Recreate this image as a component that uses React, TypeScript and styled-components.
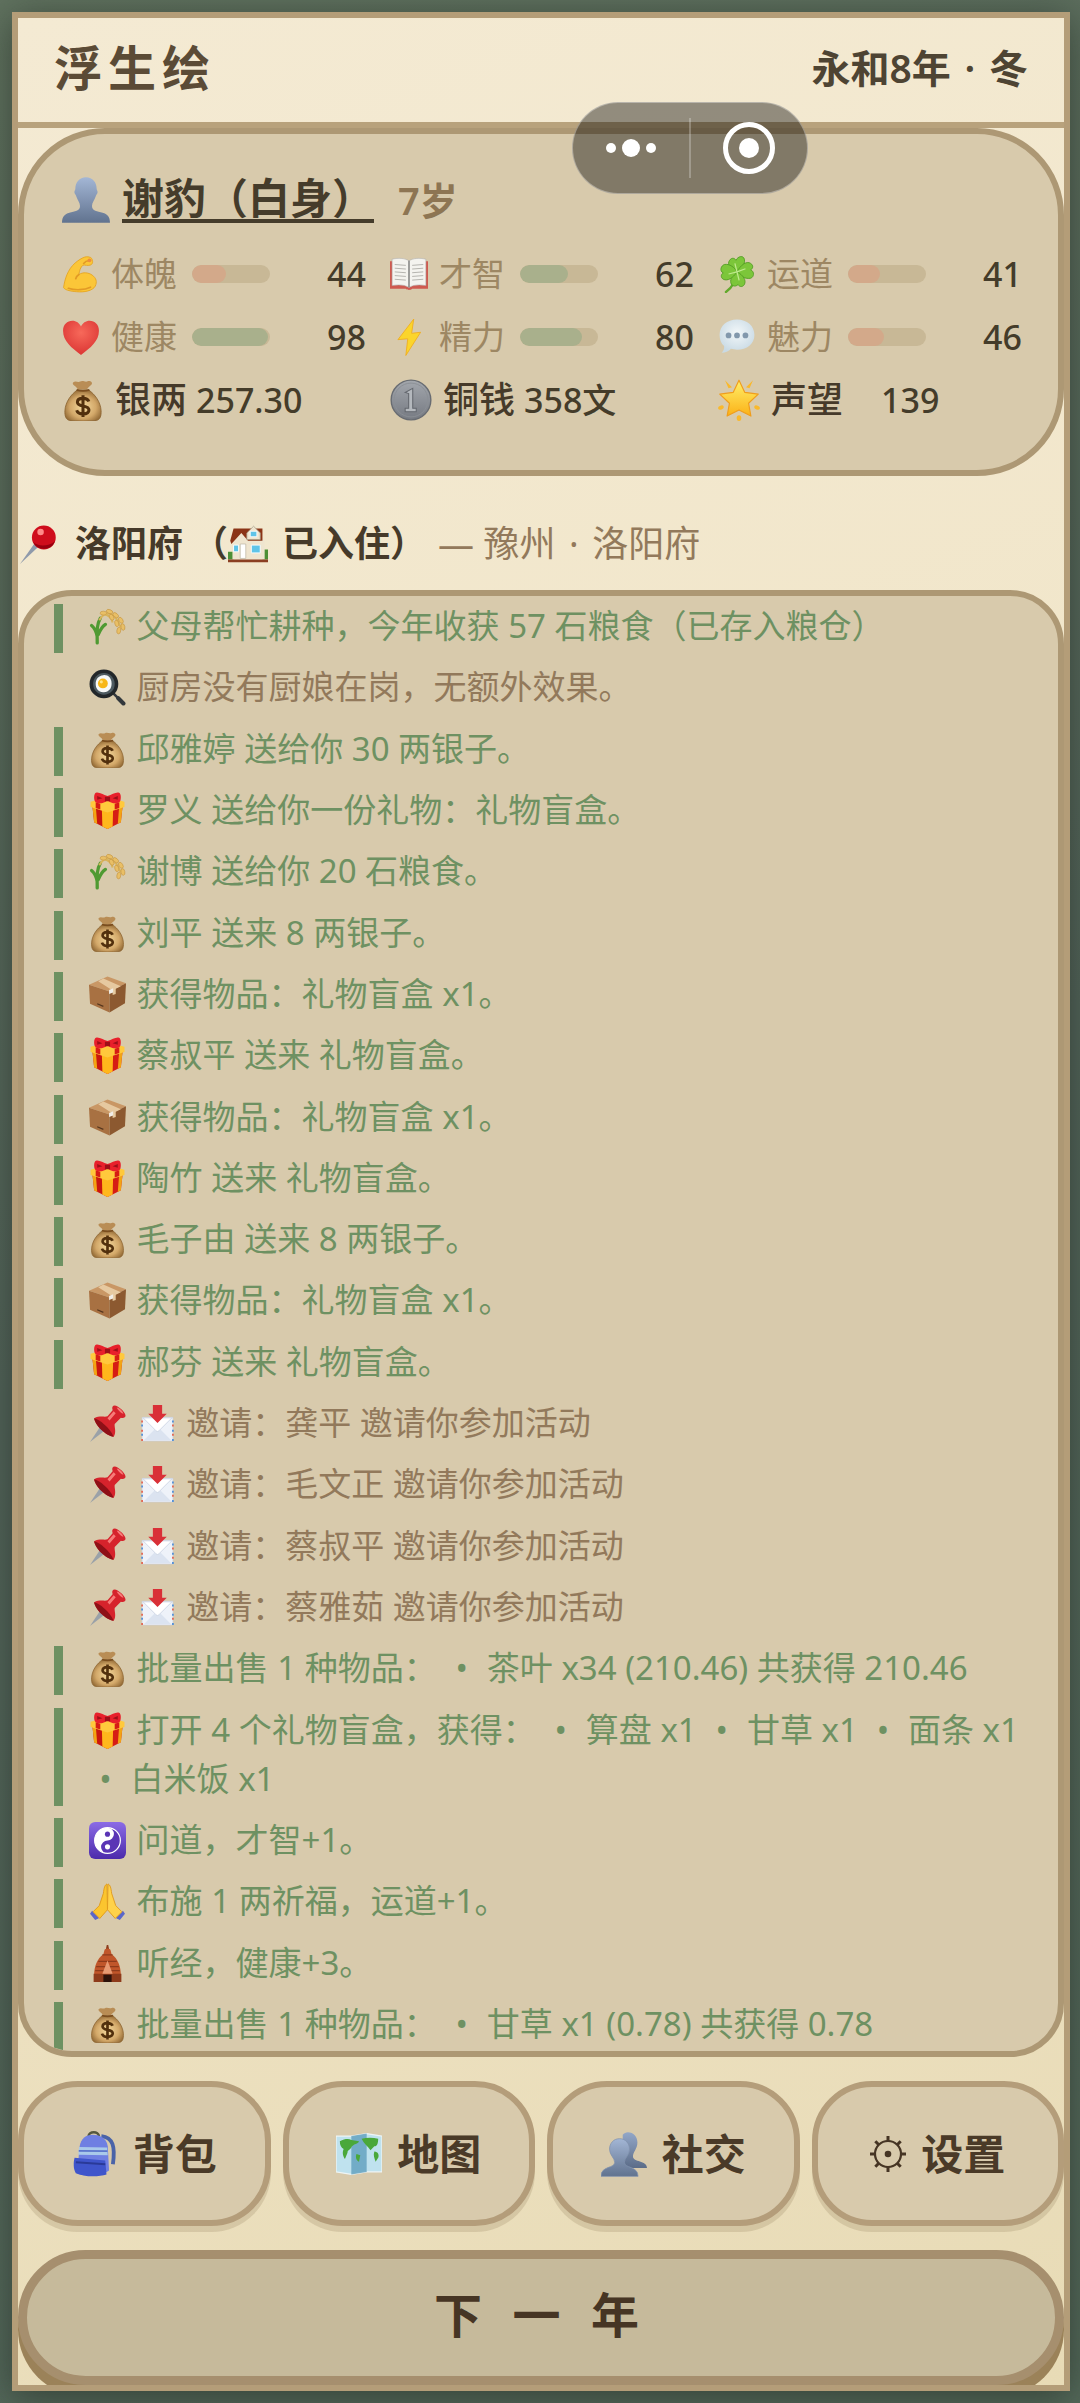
import React from "react";
import styled, { createGlobalStyle } from "styled-components";

const GlobalStyle = createGlobalStyle`
  *, *::before, *::after { box-sizing: border-box; }
  body {
    margin: 0;
    background: #56675a;
    font-family: "Noto Sans", "Noto Sans CJK SC", sans-serif;
    color: #463a2a;
  }
  button { font: inherit; color: inherit; cursor: pointer; }
`;

/* ---------- icons ---------- */

const art: Record<string, React.ReactNode> = {
  person: (
    <path fill="url(#silhouette)" d="M18 1c5 0 8 4 8 8.500c0 1 .8 1.500.7 2.700c-.2 1.400-1 1.800-1.300 2.800c-.9 3-2.900 5-2.900 7.500c0 4 4 3.900 8 5c3.500 1 5.500 3 5.500 7.500H0c0-4.500 2-6.500 5.500-7.500c4-1.100 8-1 8-5c0-2.500-2-4.500-2.900-7.500c-.3-1-1.100-1.400-1.300-2.800C9.200 11 10 10.500 10 9.500C10 5 13 1 18 1z" />
  ),
  people: (
    <>
      <path fill="url(#silhouetteBack)" d="M21 1c4.500 0 7.500 3.500 7.500 8c0 5-3.500 7.500-3.500 11c0 4.500 11 3 11 9H17V3c1-1.300 2.500-2 4-2z" />
      <path fill="url(#silhouette)" stroke="#8192ae" strokeWidth=".6" d="M14.500 6c4.800 0 7.800 3.800 7.800 8.200c0 4.800-4 6.800-4 10.300c0 5 10.700 2.500 10.700 11H0c0-8.500 10.700-6 10.700-11c0-3.500-4-5.500-4-10.300C6.700 9.800 9.700 6 14.500 6z" />
    </>
  ),
  muscle: (
    <>
      <path fill="#fbc638" stroke="#e5a21f" strokeWidth=".8" d="M1.500 31c1-8 4-17.500 11-23.500c3-2.500 6-4.500 9-5.500c2-.7 6-.3 6.800 1.500c1 2.200 1.200 5-1.300 6c-2.500 1-5.500-.4-7.200.2c-2.300 1.800-3.300 5.300-3.800 8.800c4-2.500 9-2 12.500.5c4 2.800 5 6.500 3 10.500C29 34 21 35.500 14 34.800C9.500 34.500 3 33.500 1.500 31z" />
      <path fill="none" stroke="#e29a25" strokeWidth="1.600" strokeLinecap="round" d="M16 18.500c-1.500 1-2.600 2.200-3 4M20.500 8c1.500-1.800 3.500-2.800 5.500-2.500M6 31.500c6 2 15 2 21-1" />
      <circle cx="26" cy="5" r="1.800" fill="#ef8d3d" />
    </>
  ),
  book: (
    <>
      <path fill="#cf5a50" d="M0 6h36v26H21c-1 1.500-5 1.500-6 0H0z" />
      <path fill="#f4f3ef" stroke="#aaa" strokeWidth=".5" d="M2 4c6-1.500 12-1 16 1.500C22 3 28 2.500 34 4v25c-6-1.200-12-.8-16 1.800C14 28.200 8 27.800 2 29z" />
      <path stroke="#6c6c6c" strokeWidth="1.200" d="M18 5.500v25" />
      <path stroke="#aaa9a4" strokeWidth=".8" d="M4.500 9l10.500.8M4.500 12.500l10.500.8M4.500 16l10.500.8M4.500 19.500l10.500.8M4.500 23l10.500.8M31.500 9L21 9.800M31.500 12.500L21 13.300M31.500 16L21 16.800M31.500 19.500L21 20.300M31.500 23L21 23.800" />
    </>
  ),
  clover: (
    <>
      <path fill="none" stroke="#62a92c" strokeWidth="2.200" strokeLinecap="round" d="M17 17c0 8-4 14-9.500 18" />
      <g fill="#7cc63a" stroke="#4f9a22" strokeWidth=".8">
        <path d="M18 16C12 15 8 9 11 5c2-3 5-2 6 0c2-4 7-5 8-1c1 5-3 10-7 12z" />
        <path d="M18 16c3-6 9-11 13-8c3 2 2 5 0 6c4 2 3 7 0 8c-5 1-11-2-13-6z" />
        <path d="M18 16c6 3 9 8 7 12c-2 3-5 2-6 0c-3 3-7 1-7-3c0-4 3-8 6-9z" />
        <path d="M18 16c-4 6-9 9-13 7c-3-2-2-5 0-6c-4-2-2-7 1-8c5-1 10 3 12 7z" />
      </g>
      <path fill="none" stroke="#bfe98d" strokeWidth="1.200" d="M18 16l-2-8M18 16l8-3M18 16l2 8M18 16l-8 2" />
    </>
  ),
  heart: (
    <path fill="url(#heartRed)" d="M18 35C9 28 1 22 1 12C1 6 5 2.500 9.800 2.500c3.700 0 6.700 2.200 8.200 5.500c1.500-3.300 4.500-5.500 8.200-5.500C31 2.500 35 6 35 12c0 10-8 16-17 23z" />
  ),
  bolt: (
    <path fill="#fbd52b" stroke="#f0ac1e" strokeWidth=".8" d="M22.500 1L7.500 20.500l9.300-.8L15 35.500L29 13.500l-8.500 1z" />
  ),
  speech: (
    <>
      <path fill="url(#bubble)" d="M18 1.500c9.500 0 16.500 6.200 16.500 14.500S27.500 30 18 30c-2 0-4-.3-5.700-.8C10 31.500 7 33 3.500 33c1.800-1.800 2.500-4 2.300-6.500C3 24 1.500 20.300 1.500 16C1.500 7.700 8.500 1.500 18 1.500z" />
      <g fill="#8298ac">
        <circle cx="10" cy="16.500" r="2.700" />
        <circle cx="18" cy="16.500" r="2.700" />
        <circle cx="26" cy="16.500" r="2.700" />
      </g>
    </>
  ),
  bag: (
    <>
      <path fill="#b98d55" d="M9.500 3c2-2 4 .2 6-.8c2.500-1.500 4 .8 6.500-.2c2-.8 4.500 1 3.500 2.500c-1.200 1.700-3.500 2.500-4 4.500h-8C13 6.500 8 5 9.500 3z" />
      <path fill="url(#sack)" stroke="#8c6330" strokeWidth=".7" d="M13 9.500h10c5 3.500 10 10 10.500 17.500c.3 5-1 8-4 8.500c-7 .8-16 .8-23 0c-3-.5-4.300-3.500-4-8.500C3 19.500 8 13 13 9.500z" />
      <path fill="none" stroke="#7b4e1f" strokeWidth="1.500" d="M12.500 9.300c3.500 1 7.500 1 11 0" />
      <path fill="none" stroke="#52300d" strokeWidth="2.600" d="M23 19.300c-.8-2-2.800-2.700-5-2.700c-2.700 0-4.800 1.200-4.800 3.300c0 4.500 9.900 2.100 9.900 6.700c0 2.200-2.200 3.400-5.100 3.400c-2.600 0-4.700-.9-5.400-3.200M18 14v18.500" />
    </>
  ),
  coin: (
    <>
      <circle cx="18" cy="18" r="17" fill="url(#silver)" stroke="#686c72" strokeWidth="1.200" />
      <circle cx="18" cy="18" r="14.500" fill="none" stroke="#8b8f95" strokeWidth=".8" />
      <path fill="#b4b8bd" stroke="#63676e" strokeWidth=".9" d="M13 11.500l6.500-3.500v17h3V28h-9.500v-3h3V12.500z" />
    </>
  ),
  star: (
    <>
      <g fill="#f9b92c">
        <path d="M6 1l6 6l-3 1zM30 1l-6 6l3 1z" />
        <ellipse cx="2.500" cy="24.500" rx="2.500" ry="1.700" transform="rotate(-20 2.500 24.500)" />
        <ellipse cx="33.500" cy="24.500" rx="2.500" ry="1.700" transform="rotate(20 33.500 24.500)" />
        <ellipse cx="18" cy="33.500" rx="2" ry="2.500" />
      </g>
      <path fill="url(#gold)" stroke="#f09d1c" strokeWidth="1" strokeLinejoin="round" d="M18 1l5 10.500l11.500 1.500l-8.300 7.800l2 11L18 26.500l-10.200 5.300l2-11L1.500 13L13 11.500z" />
    </>
  ),
  pin: (
    <>
      <path fill="#8f9aab" d="M13 17.500l3.500 3L0 36z" />
      <circle cx="22" cy="11.500" r="11" fill="#cf0d1c" />
      <path fill="#98000f" d="M12 15.500c5 5 14 4.500 20.300-.5A11 11 0 0 1 12 15.500z" />
      <circle cx="19" cy="6.500" r="3" fill="#ff8a88" />
    </>
  ),
  house: (
    <>
      <path fill="#4c8f35" d="M0 25h5v7H0zM31 23h5v9h-5z" />
      <path fill="#efe5cf" d="M4 16l7-7h18l4 6v17H4z" />
      <path fill="#8b3417" d="M5 4h26v11h-13L12 8l-9 10l-1-3z" />
      <path fill="#efe5cf" stroke="#a9a18c" strokeWidth=".7" d="M17 8l6-6l6 6v6H17z" />
      <path fill="#5fc4e8" stroke="#fff" strokeWidth=".8" d="M20 6.500h6v5h-6zM5 19h4.500v6H5zM21 19h8v7h-8z" />
      <path fill="#fff" stroke="#b9b2a0" strokeWidth=".6" d="M11 18h5v13h-5z" />
      <path fill="#8b3f22" d="M0 32h36v2.500H0z" />
    </>
  ),
  rice: (
    <>
      <path fill="none" stroke="#4f9a32" strokeWidth="3.200" strokeLinecap="round" d="M8 34c0-10-1-17 3-24M8 28c-1-6-3-9-5.500-11M9 26c2-5 4-8 7-10" />
      <path fill="none" stroke="#d9b45c" strokeWidth="2" d="M10 12c5-9 14-11 21 7M15 6c5 1 7 4 8 8" />
      <g fill="#e9bf66" stroke="#c69744" strokeWidth=".6">
        <ellipse cx="14" cy="5" rx="3.200" ry="1.900" />
        <ellipse cx="20" cy="3.500" rx="3.200" ry="1.900" transform="rotate(20 20 3.500)" />
        <ellipse cx="26" cy="7" rx="3.200" ry="1.900" transform="rotate(40 26 7)" />
        <ellipse cx="22" cy="9" rx="3.200" ry="1.900" transform="rotate(60 22 9)" />
        <ellipse cx="31" cy="12" rx="3.200" ry="1.900" transform="rotate(60 31 12)" />
        <ellipse cx="27" cy="15" rx="3.200" ry="1.900" transform="rotate(75 27 15)" />
        <ellipse cx="33" cy="18.500" rx="3.200" ry="1.900" transform="rotate(80 33 18.500)" />
        <ellipse cx="29" cy="22" rx="3.200" ry="1.900" transform="rotate(100 29 22)" />
      </g>
    </>
  ),
  pan: (
    <>
      <path stroke="#33383c" strokeWidth="2.500" d="M23 23l6 6" />
      <path stroke="#33383c" strokeWidth="4" strokeLinecap="round" d="M28.500 28.500l5 5" />
      <circle cx="14.500" cy="14.500" r="14" fill="#22272a" />
      <circle cx="14.500" cy="14.500" r="10.500" fill="#4d5a60" />
      <path fill="#f6f8f7" d="M14 6c4.500-.5 8 3 8 8s-2.500 8-7.500 8.500S6.500 19 6.500 14.500S9 6.500 14 6z" />
      <circle cx="13.500" cy="14" r="4.800" fill="#f7b718" />
      <circle cx="12" cy="12.500" r="1.500" fill="#ffe487" />
    </>
  ),
  gift: (
    <>
      <path fill="#c9160f" d="M3 11l15 5v20L5 29.500z" />
      <path fill="#d61d14" d="M33 11l-15 5v20l13-6.500z" />
      <path fill="#f2a414" d="M3 11l3.500 1.200l1.500 19l-3-1.700zM33 11l-3.500 1.200l-1.500 19l3-1.700z" />
      <path fill="#ffb71c" d="M12.500 15h11l-.5 18.500L18 36l-5-2.500z" />
      <path fill="#ffc93c" d="M1.500 9.500L18 5l16.500 4.500v5L18 20L1.500 14.500z" />
      <path fill="#d61d14" d="M6.500 10l4.500 1.500V17l-4.500-1.500zM29.500 10L25 11.500V17l4.500-1.500z" />
      <path fill="#e8202b" d="M18 8C14 12 7 12 5.500 8.500C4.500 5 5 0 8 .5c3 .3 6 2 10 3.500c4-1.500 7-3.200 10-3.500c3-.5 3.500 4.500 2.500 8C29 12 22 12 18 8z" />
      <path fill="#9e0f18" d="M15.500 4.500h5V9h-5zM8 4l5 2l-5 1.500zM28 4l-5 2l5 1.500z" />
    </>
  ),
  parcel: (
    <>
      <path fill="#c99765" d="M18 .5L36 7l-16 8L0 8.500z" />
      <path fill="#a87142" d="M0 8.500L20 15v20.500L1 27z" />
      <path fill="#8c5930" d="M36 7L20 15v20.500L35 26.500z" />
      <path fill="#e6c9a0" d="M9 5l5-2.500L31 10l-5 2.500v5l-3 1v-4.500z" />
      <path fill="#f1ede6" d="M19.500 13.500l4-1.500v4l-4 1.500z" />
      <path stroke="#55361d" strokeWidth="1.200" d="M8 27l6 2.500" />
    </>
  ),
  pushpin: (
    <>
      <path fill="#9aa1a8" d="M11 21l4 4L1 36z" />
      <path fill="#d6232c" d="M5 13c5-3 10-1 13-2l5-6c-1-3 0-4.500 2-4.500c3 0 10 6 10.500 9.500c.3 2.500-2 3-4.500 2.500l-6 6c-.5 3 2 8-1 12.500C17 30 6 20 5 13z" />
      <path fill="#8e1017" d="M5 13c5 1 15 9 19 18c-8-1-18-11-19-18z" />
      <path fill="#f77b78" d="M18 13l6-7l2 2l-6 7zM27 2.500c2 0 6 3.500 6.500 6c-2 0-6-4-6.500-6z" />
    </>
  ),
  inbox: (
    <>
      <path fill="#eef2f9" stroke="#c5cede" strokeWidth=".6" d="M3 12h30v23H3z" />
      <path fill="none" stroke="#e4573f" strokeWidth="1.500" strokeDasharray="2 7" d="M3 15v20M33 19v16" />
      <path fill="none" stroke="#3f86d8" strokeWidth="1.500" strokeDasharray="2 7" d="M3 19v16M33 15v20" />
      <path fill="#dbe3f0" d="M5 34l13-13l13 13z" />
      <path fill="#fff" stroke="#c9d2e2" strokeWidth=".8" d="M4 12.500h28L19.500 25c-1 1-2 1-3 0z" />
      <path fill="#d93037" d="M13.500 0h9v8.500h4.500l-9 9l-9-9h4.500z" />
    </>
  ),
  yinyang: (
    <>
      <rect width="36" height="36" rx="6" fill="url(#violet)" />
      <circle cx="18" cy="18" r="12.500" fill="#5a35b5" stroke="#fff" strokeWidth="1.200" />
      <path fill="#fff" d="M18 5.500a12.500 12.500 0 0 0 0 25a6.250 6.250 0 0 1 0-12.500a6.250 6.250 0 0 0 0-12.500z" />
      <circle cx="18" cy="11.800" r="2.500" fill="#5a35b5" />
      <circle cx="18" cy="24.200" r="2.500" fill="#fff" />
    </>
  ),
  pray: (
    <>
      <path fill="#5b67c9" d="M3 27l7 7l-4 2l-5-6zM33 27l-7 7l4 2l5-6z" />
      <path fill="#fbc52f" stroke="#e09a1c" strokeWidth=".9" d="M17.500 1c-2 .5-3 4-3.500 9L10 22l-6 6l6.500 6.500L18 26z" />
      <path fill="#ffd24a" stroke="#e09a1c" strokeWidth=".9" d="M18.500 1c2 .5 3 4 3.500 9l4 12l6 6l-6.500 6.500L18 26z" />
    </>
  ),
  temple: (
    <>
      <path fill="#8c3d1e" d="M17.300 0h1.400l1 4.500h-3.400z" />
      <path fill="#c0562a" d="M15 5c1-2 5-2 6 0l1 4c6 4 9 12 9 20H5c0-8 3-16 9-20z" />
      <path fill="#8e3b1b" d="M4.500 28h27v8h-27z" />
      <path stroke="#8e3b1b" strokeWidth="1.200" d="M13 9.500h10M9 16h18M7 21h22M6 25h24" />
      <path fill="#e79a72" d="M18 15l5 13H13z" />
      <path fill="#2c120a" d="M14 29h8v7h-8z" />
    </>
  ),
  backpack: (
    <>
      <path fill="none" stroke="#55583f" strokeWidth="2" d="M13 4c0-4 8-4 8 0" />
      <path fill="none" stroke="#4a63a8" strokeWidth="3" d="M23 4c9 1 11 8 9 22" />
      <path fill="#6f7fe2" d="M6 12c1-6 5-9 10-9s11 2 12 9l1 19c-5 4-19 5-25 2z" />
      <path fill="#a9c9ea" d="M5.500 12.500l22 .5l.5 6l-23-.5z" />
      <path stroke="#5a74cc" strokeWidth="1.300" d="M5.300 15.500l22.500.3" />
      <path fill="#3f55cb" d="M2 21l24 2l1 11c-6 2-18 2-24-1c-2-3-2-8-1-12z" />
      <path stroke="#2a3a98" strokeWidth="1.500" d="M3 24.500l23 1.500" />
    </>
  ),
  map: (
    <>
      <path fill="#bfe2ee" stroke="#eef4f4" strokeWidth="1" d="M0 4h12l12-2l12 2v28H24l-12 2l-12-2z" />
      <path fill="#5f9fbd" d="M12 4l12-2v30l-12 2z" opacity=".8" />
      <path fill="#4aa83a" d="M3 8c4-2 7-2 9-1l6 1c0 2-5 2-6 5c-1 2-3 2-3 4l-2 5c-2-3-2-6-1-8c-2-1-3-3-3-6zM20 6c4-1 9-1 13 0c0 4-1 6-3 6l-3 3c-2-3-5-5-7-9zM16 18l3 1l-1 5c-2-1-3-3-2-6zM30 16c3 0 4 3 3 5l-2 3c-1-3-2-5-1-8z" />
    </>
  ),
  gear: (
    <>
      <circle cx="18" cy="18" r="13" fill="none" stroke="#463524" strokeWidth="2.200" />
      <circle cx="18" cy="18" r="3.300" fill="#463524" />
      <path stroke="#463524" strokeWidth="3" d="M18 0v5M18 31v5M0 18h5M31 18h5M5.300 5.300l3.500 3.500M27.200 27.200l3.500 3.500M5.300 30.700l3.500-3.500M27.200 8.800l3.500-3.500" />
    </>
  ),
};

const Svg = styled.svg<{ $size: number }>`
  flex: none;
  width: ${(p) => p.$size}px;
  height: ${(p) => p.$size}px;
`;

const Icon = ({ name, size }: { name: string; size: number }) => (
  <Svg $size={size} viewBox="0 0 36 36" aria-hidden="true">
    {art[name]}
  </Svg>
);

const DefsSvg = styled.svg`
  position: absolute;
  width: 0;
  height: 0;
`;

const Defs = () => (
  <DefsSvg aria-hidden="true">
    <defs>
      <linearGradient id="silhouette" x1="0" y1="0" x2="0" y2="1">
        <stop offset="0" stopColor="#a3b6d5" />
        <stop offset="1" stopColor="#61738f" />
      </linearGradient>
      <linearGradient id="silhouetteBack" x1="0" y1="0" x2="0" y2="1">
        <stop offset="0" stopColor="#93a7c8" />
        <stop offset="1" stopColor="#5b6c88" />
      </linearGradient>
      <radialGradient id="heartRed" cx=".5" cy=".35" r=".6">
        <stop offset="0" stopColor="#f7695a" />
        <stop offset="1" stopColor="#de3a37" />
      </radialGradient>
      <radialGradient id="bubble" cx=".5" cy=".4" r=".6">
        <stop offset="0" stopColor="#f2f7f9" />
        <stop offset="1" stopColor="#c9dae4" />
      </radialGradient>
      <radialGradient id="sack" cx=".5" cy=".55" r=".6">
        <stop offset="0" stopColor="#f3d89c" />
        <stop offset=".6" stopColor="#d3a869" />
        <stop offset="1" stopColor="#8a622f" />
      </radialGradient>
      <linearGradient id="silver" x1="0" y1="0" x2="0" y2="1">
        <stop offset="0" stopColor="#a3a7ad" />
        <stop offset="1" stopColor="#767a82" />
      </linearGradient>
      <linearGradient id="gold" x1="0" y1="0" x2="0" y2="1">
        <stop offset="0" stopColor="#fff06a" />
        <stop offset="1" stopColor="#fbb117" />
      </linearGradient>
      <linearGradient id="violet" x1="0" y1="0" x2="0" y2="1">
        <stop offset="0" stopColor="#8b6be6" />
        <stop offset="1" stopColor="#4c2bab" />
      </linearGradient>
    </defs>
  </DefsSvg>
);

/* ---------- layout ---------- */

const Backdrop = styled.div`
  display: flex;
  min-height: 100vh;
  padding: 12px 10px 12px 12px;
  background: linear-gradient(160deg, #60725f 0%, #53645a 50%, #54695a 100%);
`;

const Frame = styled.main`
  flex: 1;
  min-width: 0;
  display: flex;
  flex-direction: column;
  border: 6px solid #b49d78;
  background: linear-gradient(160deg, #f4ead3 0%, #f1e6ca 40%, #e8dbb6 100%);
  box-shadow: 0 6px 36px rgba(30, 38, 30, 0.6);
  overflow: hidden;
`;

const Header = styled.header`
  display: flex;
  align-items: center;
  justify-content: space-between;
  height: 110px;
  padding: 0 36px 4px;
  border-bottom: 6px solid #b8a27c;
  color: #5b4b36;
`;

const Title = styled.h1`
  margin: 0;
  font-size: 48px;
  font-weight: 700;
  line-height: 72px;
  letter-spacing: 6px;
`;

const DateText = styled.time`
  font-size: 39px;
  font-weight: 600;
  line-height: 60px;
  color: #4e4433;
`;

const Dot = styled.span`
  display: inline-block;
  width: 18px;
  text-align: center;
`;

const StatusPanel = styled.section`
  height: 348px;
  padding: 36px 36px 36px 38px;
  border: 6px solid #ad9874;
  border-radius: 87px;
  background: #d8caac;
`;

const NameRow = styled.div`
  display: flex;
  align-items: center;
  gap: 12px;
  height: 60px;
`;

const PlayerName = styled.a`
  display: block;
  border-bottom: 4px solid #453c2b;
  color: #453c2b;
  font-size: 42px;
  font-weight: 600;
  line-height: 42px;
  text-decoration: none;
`;

const Age = styled.span`
  margin-left: 12px;
  font-size: 38px;
  font-weight: 600;
  line-height: 54px;
  color: #8d7553;
`;

const StatGrid = styled.div`
  display: grid;
  grid-template-columns: repeat(3, 1fr);
  grid-auto-rows: 63px;
  column-gap: 24px;
  align-items: center;
  padding-top: 12px;
  line-height: 48px;
`;

const Stat = styled.div`
  display: flex;
  align-items: center;
`;

const StatName = styled.span`
  width: 81px;
  margin-left: 11px;
  font-size: 33px;
  color: #9d8763;
`;

const Track = styled.div`
  width: 78px;
  height: 18px;
  border-radius: 9px;
  background: #c8b896;
  overflow: hidden;
`;

const Fill = styled.div<{ $low: boolean }>`
  height: 100%;
  border-radius: 9px;
  background: ${(p) => (p.$low ? "#d3a98a" : "#a9b08c")};
`;

const StatValue = styled.span`
  margin-left: auto;
  font-size: 34px;
  font-weight: 500;
  color: #443c2a;
`;

const Wealth = styled.div<{ $gap: number }>`
  display: flex;
  align-items: center;
  font-size: 36px;
  font-weight: 500;
  white-space: nowrap;

  span { margin-left: 11px; }
  strong {
    margin-left: ${(p) => p.$gap}px;
    font-size: 34px;
    font-weight: 500;
    color: #443c2a;
  }
`;

const Place = styled.div`
  display: flex;
  align-items: center;
  height: 114px;
  padding: 22px 0 0 2px;
  font-size: 36px;
  line-height: 54px;
  white-space: nowrap;
`;

const PlaceName = styled.span`
  display: flex;
  align-items: center;
  gap: 9px;
  font-weight: 600;
  margin-left: 16px;
`;

const Residence = styled.span`
  display: flex;
  align-items: center;
  gap: 12px;

  svg { margin: 0 2px 0 -12px; }
`;

const Region = styled.span`
  margin-left: 12px;
  color: #92795b;
`;

const Log = styled.ul`
  flex: 1;
  display: flex;
  flex-direction: column;
  justify-content: space-between;
  margin: 0;
  padding: 8px 30px 0;
  list-style: none;
  border: 6px solid #ad9874;
  border-radius: 54px;
  background: #d8caac;
  overflow: hidden;
  font-size: 33px;
  line-height: 49px;
`;

const LogLine = styled.li<{ $good: boolean }>`
  padding-left: 26px;
  border-left: 9px solid ${(p) => (p.$good ? "#6e9162" : "transparent")};
  color: ${(p) => (p.$good ? "#6e9162" : "#92795b")};
`;

const LogText = styled.p`
  margin: -3px 0 3px;

  svg {
    margin-right: 2px;
    vertical-align: -7px;
  }
  svg + svg { margin-left: 2px; }
`;

const Bullet = styled.span`
  display: inline-block;
  width: 33px;
  text-align: center;
`;

const Menu = styled.nav`
  display: grid;
  grid-template-columns: repeat(4, 1fr);
  gap: 12px;
  padding: 24px 0;
`;

const MenuButton = styled.button`
  display: flex;
  align-items: center;
  justify-content: center;
  gap: 15px;
  height: 145px;
  padding: 0;
  border: 6px solid #b49d7a;
  border-radius: 60px;
  background: #d8caac;
  box-shadow: 0 6px 0 rgba(150, 130, 95, 0.25);
  font-size: 42px;
  font-weight: 600;
  line-height: 60px;
  color: #4a3a28;
`;

const NextButton = styled.button`
  flex: none;
  height: 135px;
  padding: 0 0 6px;
  border: 9px solid #a68f6e;
  border-radius: 68px;
  background: #c6ba9b;
  box-shadow: 0 12px 0 #9b8259;
  font-size: 48px;
  font-weight: 700;
  line-height: 72px;
  letter-spacing: 9px;
  color: #463524;
`;

const Capsule = styled.div`
  position: absolute;
  top: 102px;
  right: 272px;
  display: flex;
  align-items: center;
  width: 236px;
  height: 92px;
  border: 1px solid rgba(255, 255, 255, 0.35);
  border-radius: 46px;
  background: rgba(0, 0, 0, 0.4);
`;

const CapsuleButton = styled.button`
  flex: 1;
  display: flex;
  justify-content: center;
  padding: 0;
  border: 0;
  background: none;

  & + & { border-left: 2px solid rgba(255, 255, 255, 0.25); }
`;

const stats = [
  { icon: "muscle", name: "体魄", value: 44 },
  { icon: "book", name: "才智", value: 62 },
  { icon: "clover", name: "运道", value: 41 },
  { icon: "heart", name: "健康", value: 98 },
  { icon: "bolt", name: "精力", value: 80 },
  { icon: "speech", name: "魅力", value: 46 },
];

const wealth = [
  { icon: "bag", name: "银两", value: "257.30", gap: 9 },
  { icon: "coin", name: "铜钱", value: "358文", gap: 9 },
  { icon: "star", name: "声望", value: "139", gap: 38 },
];

type Entry = { icons: string[]; text: string; plain?: boolean };

const entries: Entry[] = [
  { icons: ["rice"], text: "父母帮忙耕种，今年收获 57 石粮食（已存入粮仓）" },
  { icons: ["pan"], text: "厨房没有厨娘在岗，无额外效果。", plain: true },
  { icons: ["bag"], text: "邱雅婷 送给你 30 两银子。" },
  { icons: ["gift"], text: "罗义 送给你一份礼物：礼物盲盒。" },
  { icons: ["rice"], text: "谢博 送给你 20 石粮食。" },
  { icons: ["bag"], text: "刘平 送来 8 两银子。" },
  { icons: ["parcel"], text: "获得物品：礼物盲盒 x1。" },
  { icons: ["gift"], text: "蔡叔平 送来 礼物盲盒。" },
  { icons: ["parcel"], text: "获得物品：礼物盲盒 x1。" },
  { icons: ["gift"], text: "陶竹 送来 礼物盲盒。" },
  { icons: ["bag"], text: "毛子由 送来 8 两银子。" },
  { icons: ["parcel"], text: "获得物品：礼物盲盒 x1。" },
  { icons: ["gift"], text: "郝芬 送来 礼物盲盒。" },
  { icons: ["pushpin", "inbox"], text: "邀请：龚平 邀请你参加活动", plain: true },
  { icons: ["pushpin", "inbox"], text: "邀请：毛文正 邀请你参加活动", plain: true },
  { icons: ["pushpin", "inbox"], text: "邀请：蔡叔平 邀请你参加活动", plain: true },
  { icons: ["pushpin", "inbox"], text: "邀请：蔡雅茹 邀请你参加活动", plain: true },
  { icons: ["bag"], text: "批量出售 1 种物品： • 茶叶 x34 (210.46) 共获得 210.46" },
  { icons: ["gift"], text: "打开 4 个礼物盲盒，获得： • 算盘 x1 • 甘草 x1 • 面条 x1 • 白米饭 x1" },
  { icons: ["yinyang"], text: "问道，才智+1。" },
  { icons: ["pray"], text: "布施 1 两祈福，运道+1。" },
  { icons: ["temple"], text: "听经，健康+3。" },
  { icons: ["bag"], text: "批量出售 1 种物品： • 甘草 x1 (0.78) 共获得 0.78" },
];

const menu = [
  { icon: "backpack", name: "背包", size: 46 },
  { icon: "map", name: "地图", size: 46 },
  { icon: "people", name: "社交", size: 46 },
  { icon: "gear", name: "设置", size: 36 },
];

const withBullets = (text: string) =>
  text.split("•").map((part, i) => (
    <React.Fragment key={i}>
      {i > 0 && <Bullet>•</Bullet>}
      {part}
    </React.Fragment>
  ));

export default function App() {
  return (
    <Backdrop lang="zh-CN">
      <GlobalStyle />
      <Defs />
      <Frame>
        <Header>
          <Title>浮生绘</Title>
          <DateText>
            永和8年 <Dot>·</Dot> 冬
          </DateText>
        </Header>

        <StatusPanel>
          <NameRow>
            <Icon name="person" size={48} />
            <PlayerName href="#player">谢豹（白身）</PlayerName>
            <Age>7岁</Age>
          </NameRow>
          <StatGrid>
            {stats.map((s) => (
              <Stat key={s.name}>
                <Icon name={s.icon} size={38} />
                <StatName>{s.name}</StatName>
                <Track>
                  <Fill $low={s.value < 50} style={{ width: `${s.value}%` }} />
                </Track>
                <StatValue>{s.value}</StatValue>
              </Stat>
            ))}
            {wealth.map((w) => (
              <Wealth key={w.name} $gap={w.gap}>
                <Icon name={w.icon} size={42} />
                <span>{w.name}</span>
                <strong>{w.value}</strong>
              </Wealth>
            ))}
          </StatGrid>
        </StatusPanel>

        <Place>
          <Icon name="pin" size={39} />
          <PlaceName>
            洛阳府
            <Residence>
              （<Icon name="house" size={40} />
              已入住）
            </Residence>
          </PlaceName>
          <Region>
            — 豫州 <Dot>·</Dot> 洛阳府
          </Region>
        </Place>

        <Log>
          {entries.map((e, i) => (
            <LogLine key={i} $good={!e.plain}>
              <LogText>
                {e.icons.map((name) => (
                  <React.Fragment key={name}>
                    <Icon name={name} size={37} />{" "}
                  </React.Fragment>
                ))}
                {withBullets(e.text)}
              </LogText>
            </LogLine>
          ))}
        </Log>

        <Menu>
          {menu.map((m) => (
            <MenuButton key={m.name} type="button">
              <Icon name={m.icon} size={m.size} />
              {m.name}
            </MenuButton>
          ))}
        </Menu>

        <NextButton type="button">下 一 年</NextButton>
      </Frame>

      <Capsule>
        <CapsuleButton type="button" aria-label="更多">
          <svg width="52" height="20" viewBox="0 0 52 20" fill="#fff" aria-hidden="true">
            <circle cx="6" cy="10" r="5" />
            <circle cx="26" cy="10" r="9" />
            <circle cx="46" cy="10" r="5" />
          </svg>
        </CapsuleButton>
        <CapsuleButton type="button" aria-label="关闭">
          <svg width="60" height="60" viewBox="0 0 60 60" aria-hidden="true">
            <circle cx="30" cy="30" r="23.500" fill="none" stroke="#fff" strokeWidth="5" />
            <circle cx="30" cy="30" r="10" fill="#fff" />
          </svg>
        </CapsuleButton>
      </Capsule>
    </Backdrop>
  );
}
